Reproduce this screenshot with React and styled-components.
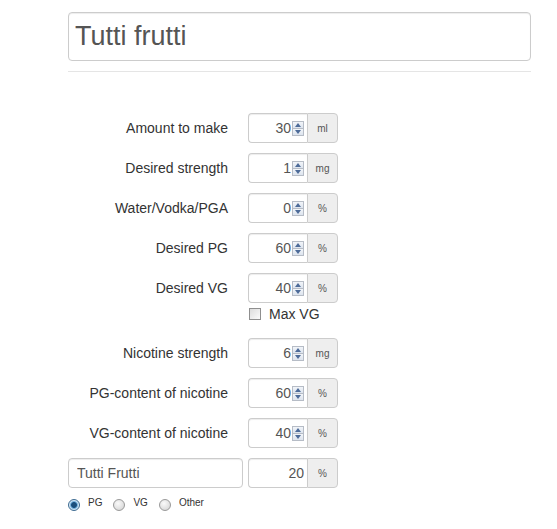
import React from "react";
import styled, { createGlobalStyle } from "styled-components";

const Global = createGlobalStyle`
  html, body { margin: 0; padding: 0; background: #fff; }
  body { font-family: "Liberation Sans", Arial, sans-serif; color: #333; }
  * { box-sizing: border-box; }
`;

const Page = styled.div`
  width: 557px;
  height: 529px;
  padding: 12px 0 0 68px;
  overflow: hidden;
`;

const Content = styled.div`
  width: 463px;
`;

const TitleInput = styled.input`
  display: block;
  width: 100%;
  height: 49px;
  border: 1px solid #ccc;
  border-radius: 4px;
  box-shadow: inset 0 1px 1px rgba(0, 0, 0, 0.075);
  padding: 0 6px;
  font-family: "Liberation Sans", Arial, sans-serif;
  font-size: 27px;
  color: #555;
  outline: none;
`;

const Rule = styled.hr`
  margin: 10px 0 41px;
  border: 0;
  border-top: 1px solid #e5e5e5;
`;

const Form = styled.div`
  display: flex;
  flex-direction: column;
`;

const Row = styled.div`
  display: grid;
  grid-template-columns: 160px 90px;
  column-gap: 20px;
  align-items: center;
  height: 30px;
  margin-bottom: ${(p) => p.$mb ?? 10}px;
`;

const Label = styled.div`
  font-size: 14px;
  color: #333;
  text-align: right;
  white-space: nowrap;
`;

const Group = styled.div`
  display: flex;
  height: 30px;
  width: 90px;
  flex-shrink: 0;
`;

const Field = styled.div`
  flex: 1;
  min-width: 0;
  display: flex;
  align-items: center;
  border: 1px solid #ccc;
  border-right: 0;
  border-radius: 4px 0 0 4px;
  box-shadow: inset 0 1px 1px rgba(0, 0, 0, 0.075);
  padding-right: ${(p) => (p.$spin ? 3 : 2)}px;
  background: #fff;
`;

const Num = styled.input`
  flex: 1;
  width: 0;
  min-width: 0;
  border: 0;
  outline: none;
  background: transparent;
  text-align: right;
  font-family: "Liberation Sans", Arial, sans-serif;
  font-size: 14px;
  color: #555;
  padding: 0 1px 0 0;
`;

const Spinner = styled.span`
  display: flex;
  flex-direction: column;
  flex-shrink: 0;
  width: 12px;
  height: 15px;
  margin-top: 1px;
`;

const SpinHalf = styled.span`
  flex: 1;
  display: flex;
  align-items: center;
  justify-content: center;
  border: 1px solid #b6bcc6;
  background: linear-gradient(#f2f5f9, #dde4ee);
  & + & { border-top: 0; }
`;

const Addon = styled.div`
  width: 31px;
  flex-shrink: 0;
  display: flex;
  align-items: center;
  justify-content: center;
  border: 1px solid #ccc;
  border-radius: 0 4px 4px 0;
  background: #eee;
  font-size: 10px;
  color: #555;
`;

const Arrow = ({ up }) => (
  <svg width="6" height="4" viewBox="0 0 6 4">
    <path d={up ? "M0 4 L3 0 L6 4 Z" : "M0 0 L3 4 L6 0 Z"} fill="#4d6b99" />
  </svg>
);

const NumberInput = ({ value, unit, spin = true }) => (
  <Group>
    <Field $spin={spin}>
      <Num type="text" size={2} defaultValue={value} />
      {spin && (
        <Spinner>
          <SpinHalf><Arrow up /></SpinHalf>
          <SpinHalf><Arrow /></SpinHalf>
        </Spinner>
      )}
    </Field>
    <Addon>{unit}</Addon>
  </Group>
);

const CheckRow = styled.div`
  display: flex;
  align-items: center;
  height: 20px;
  margin: 1px 0 14px 181px;
  font-size: 14px;
  color: #333;
  gap: 8px;
`;

const Box = styled.span`
  width: 12px;
  height: 12px;
  border: 1px solid #8f8f8f;
  background: linear-gradient(135deg, #dcdcdc, #fbfbfb);
`;

const FlavorRow = styled.div`
  display: flex;
  height: 30px;
  gap: 5px;
  margin-top: 10px;
`;

const TextField = styled.input`
  width: 175px;
  height: 30px;
  border: 1px solid #ccc;
  border-radius: 4px;
  box-shadow: inset 0 1px 1px rgba(0, 0, 0, 0.075);
  padding: 0 8px;
  font-family: "Liberation Sans", Arial, sans-serif;
  font-size: 14px;
  color: #555;
  outline: none;
`;

const Radios = styled.div`
  display: flex;
  align-items: center;
  margin-top: 9px;
  height: 14px;
  gap: 8px;
`;

const RadioItem = styled.label`
  display: flex;
  align-items: center;
  gap: 8px;
  font-size: 10px;
  color: #333;
  margin-right: 3px;
`;

const RadioText = styled.span`
  margin-top: -4px;
`;

const Dot = styled.span`
  width: 12px;
  height: 12px;
  border-radius: 50%;
  border: 1px solid ${(p) => (p.$on ? "#3d6b91" : "#999")};
  background: ${(p) =>
    p.$on
      ? "radial-gradient(circle, #1c4f7c 0 2.5px, #5ea3d6 3.2px, #d7e9f7 4.5px)"
      : "radial-gradient(circle at 40% 35%, #fafafa, #d0d0d0)"};
  margin-top: 2px;
`;

const rows = [
  ["Amount to make", "30", "ml"],
  ["Desired strength", "1", "mg"],
  ["Water/Vodka/PGA", "0", "%"],
  ["Desired PG", "60", "%"],
  ["Desired VG", "40", "%"],
];

const rows2 = [
  ["Nicotine strength", "6", "mg"],
  ["PG-content of nicotine", "60", "%"],
  ["VG-content of nicotine", "40", "%"],
];

export default function App() {
  return (
    <>
      <Global />
      <Page>
        <Content>
          <TitleInput defaultValue="Tutti frutti" />
          <Rule />
          <Form>
            {rows.map(([l, v, u], i) => (
              <Row key={l} $mb={i === rows.length - 1 ? 0 : 10}>
                <Label>{l}</Label>
                <NumberInput value={v} unit={u} />
              </Row>
            ))}
            <CheckRow>
              <Box />
              <span>Max VG</span>
            </CheckRow>
            {rows2.map(([l, v, u], i) => (
              <Row key={l} $mb={i === rows2.length - 1 ? 0 : 10}>
                <Label>{l}</Label>
                <NumberInput value={v} unit={u} />
              </Row>
            ))}
            <FlavorRow>
              <TextField defaultValue="Tutti Frutti" />
              <NumberInput value="20" unit="%" spin={false} />
            </FlavorRow>
            <Radios>
              <RadioItem><Dot $on /><RadioText>PG</RadioText></RadioItem>
              <RadioItem><Dot /><RadioText>VG</RadioText></RadioItem>
              <RadioItem><Dot /><RadioText>Other</RadioText></RadioItem>
            </Radios>
          </Form>
        </Content>
      </Page>
    </>
  );
}
